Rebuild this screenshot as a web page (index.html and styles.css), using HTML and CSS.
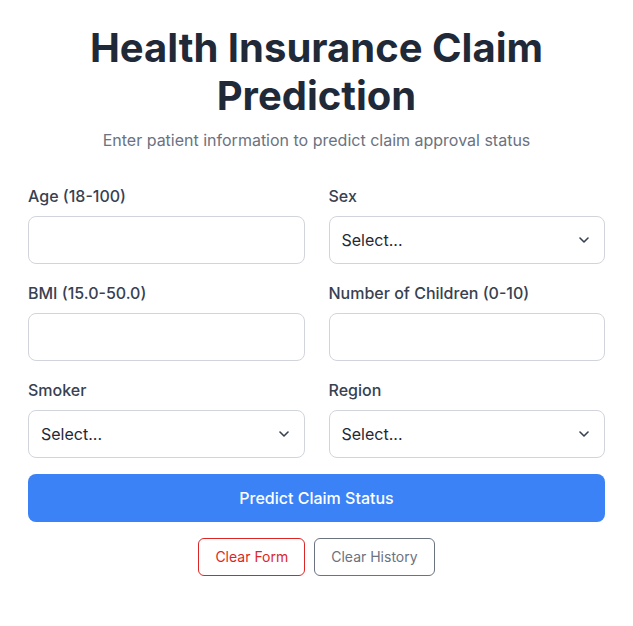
FILE: index.html
```html
<!DOCTYPE html>
<html lang="en">
<head>
<meta charset="utf-8">
<title>Health Insurance Claim Prediction</title>
<link rel="stylesheet" href="styles.css">
</head>
<body>
<main class="page">
  <h1 class="title">Health Insurance Claim Prediction</h1>
  <p class="subtitle">Enter patient information to predict claim approval status</p>
  <form class="form">
    <div class="grid">
      <div class="field">
        <label class="label" for="age">Age (18-100)</label>
        <input class="control" id="age" type="text">
      </div>
      <div class="field">
        <label class="label" for="sex">Sex</label>
        <div class="select-wrap">
          <select class="control select" id="sex"><option>Select...</option></select>
          <svg class="chev" width="10" height="6" viewBox="0 0 10 6"><path d="M1 1L5 5L9 1" fill="none" stroke="#374151" stroke-width="1.6" stroke-linecap="round" stroke-linejoin="round"/></svg>
        </div>
      </div>
      <div class="field">
        <label class="label" for="bmi">BMI (15.0-50.0)</label>
        <input class="control" id="bmi" type="text">
      </div>
      <div class="field">
        <label class="label" for="children">Number of Children (0-10)</label>
        <input class="control" id="children" type="text">
      </div>
      <div class="field">
        <label class="label" for="smoker">Smoker</label>
        <div class="select-wrap">
          <select class="control select" id="smoker"><option>Select...</option></select>
          <svg class="chev" width="10" height="6" viewBox="0 0 10 6"><path d="M1 1L5 5L9 1" fill="none" stroke="#374151" stroke-width="1.6" stroke-linecap="round" stroke-linejoin="round"/></svg>
        </div>
      </div>
      <div class="field">
        <label class="label" for="region">Region</label>
        <div class="select-wrap">
          <select class="control select" id="region"><option>Select...</option></select>
          <svg class="chev" width="10" height="6" viewBox="0 0 10 6"><path d="M1 1L5 5L9 1" fill="none" stroke="#374151" stroke-width="1.6" stroke-linecap="round" stroke-linejoin="round"/></svg>
        </div>
      </div>
    </div>
    <button type="button" class="btn-primary">Predict Claim Status</button>
    <div class="actions">
      <button type="button" class="btn-outline btn-danger">Clear Form</button>
      <button type="button" class="btn-outline btn-muted">Clear History</button>
    </div>
  </form>
</main>
</body>
</html>
```

FILE: styles.css
```css
* { box-sizing: border-box; }
html, body { margin: 0; padding: 0; background: #ffffff; }
body {
  font-family: Inter, "Noto Sans", "Liberation Sans", sans-serif;
  color: #1f2937;
}
.page {
  padding: 24px 28px;
}
.title {
  margin: 0;
  text-align: center;
  font-size: 40px;
  line-height: 48px;
  font-weight: 700;
  color: #1f2937;
}
.subtitle {
  margin: 8px 0 0;
  text-align: center;
  font-size: 16px;
  line-height: 24px;
  color: #6b7280;
}
.form {
  margin-top: 32px;
  display: flex;
  flex-direction: column;
}
.grid {
  display: grid;
  grid-template-columns: 1fr 1fr;
  column-gap: 24px;
  row-gap: 17px;
}
.field {
  display: flex;
  flex-direction: column;
}
.label {
  font-size: 16px;
  line-height: 24px;
  font-weight: 500;
  color: #374151;
  margin-bottom: 8px;
}
.control {
  width: 100%;
  height: 48px;
  border: 1px solid #d1d5db;
  border-radius: 8px;
  background: #ffffff;
  padding: 0 12px;
  font-family: inherit;
  font-size: 16px;
  color: #1f2937;
  outline: none;
}
.select-wrap {
  position: relative;
}
.select {
  appearance: none;
  -webkit-appearance: none;
  padding-right: 36px;
}
.chev {
  position: absolute;
  right: 16px;
  top: 21px;
  pointer-events: none;
}
.btn-primary {
  margin-top: 16px;
  height: 48px;
  border: none;
  border-radius: 8px;
  background: #3b82f6;
  color: #ffffff;
  font-family: inherit;
  font-size: 16px;
  font-weight: 500;
}
.actions {
  margin-top: 16px;
  display: flex;
  justify-content: center;
  gap: 9px;
}
.btn-outline {
  height: 38px;
  padding: 0 16px;
  border-radius: 6px;
  background: #ffffff;
  font-family: inherit;
  font-size: 14px;
  line-height: 20px;
}
.btn-danger {
  border: 1px solid #dc2626;
  color: #dc2626;
}
.btn-muted {
  border: 1px solid #6b7280;
  color: #6b7280;
}
```
